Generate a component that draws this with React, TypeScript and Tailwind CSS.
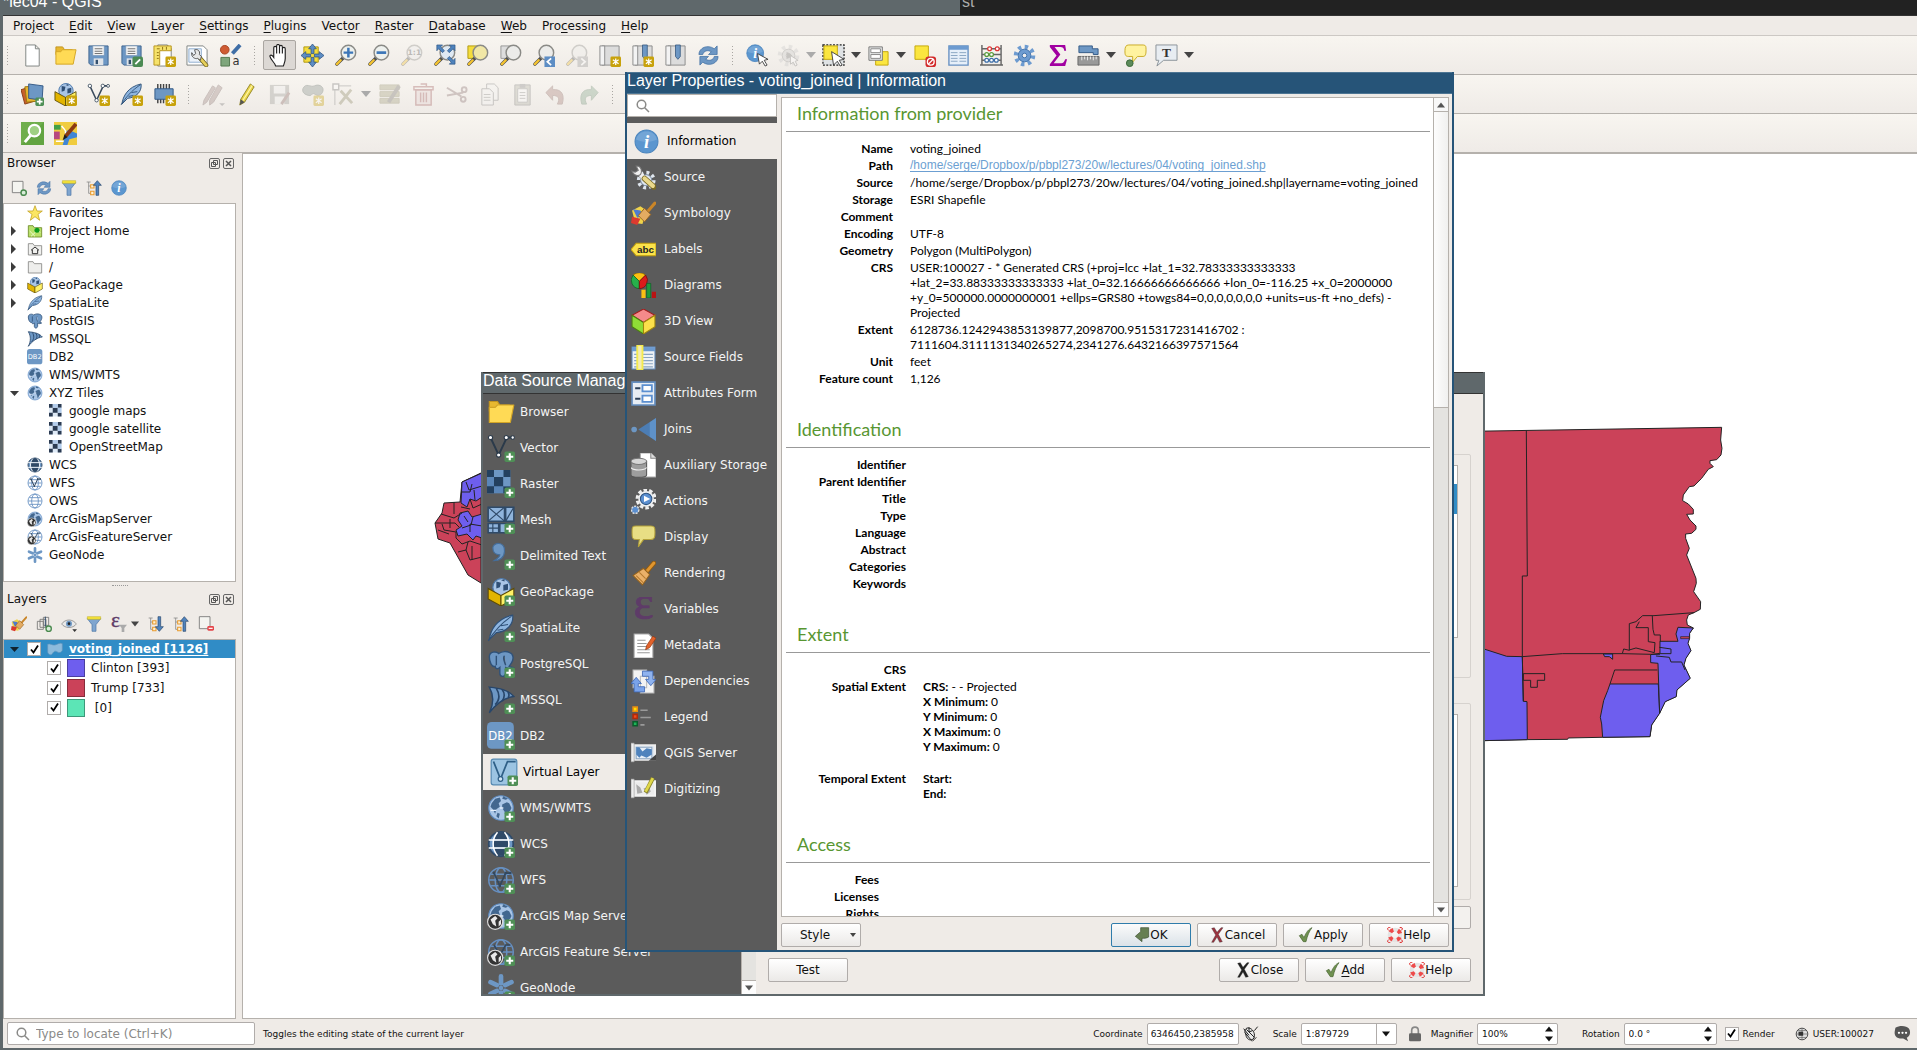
import type { ReactNode } from "react";

const BLUE = "#6d97c4";
const NAVY = "#2f4a68";

const globe = (
  <>
    <circle cx="12" cy="12" r="10.5" fill="#a9c5e6" stroke="#5f8dc2" />
    <path
      d="M4 8l3-4 4-1 1 3-2 2 1 3-3 2-1 4-2-4-2-2zM13 9l4-2 2 1 2 4-2 4-3 4-1-5-2-3zM9 16l2 1-1 4-2-2zM14 2l4 2-2 1-3-1z"
      fill="#42678f"
    />
    <path d="M3 14h5M11 12h3M18 18l2-3" stroke="#e4eefa" strokeWidth="1.2" />
  </>
);

const wireGlobe = (
  <g fill="none" stroke="#6690c2" strokeWidth="1.3">
    <circle cx="12" cy="12" r="10.5" />
    <ellipse cx="12" cy="12" rx="5" ry="10.5" />
    <path d="M2 12h20M3.5 7h17M3.5 17h17" />
  </g>
);

const lens = (glass: string) => (
  <>
    <path d="M10 14l-7 7" stroke="#4f4f4f" strokeWidth="3.6" strokeLinecap="round" />
    <path d="M7 17l-4 4" stroke="#f4c330" strokeWidth="2.4" strokeLinecap="round" />
    <circle cx="15" cy="9" r="7.6" fill={glass} stroke="#8a8a86" strokeWidth="1.5" />
  </>
);

const page = <path d="M5 1h10l4 4v18H5z M15 1v4h4" fill="#fff" stroke="#7f8583" strokeLinejoin="round" />;

const floppy = (
  <>
    <path d="M2 2h20v20H4l-2-2z" fill={BLUE} stroke="#3f648f" />
    <path d="M6 2h12v10H6z" fill="#f3f3f3" stroke="#6c8db2" strokeWidth=".6" />
    <path d="M8 5h8M8 7.5h8M8 10h8" stroke="#777" strokeWidth="1.1" />
    <path d="M7 15h10v7H7z" fill="#dfe3e8" />
    <path d="M9 16.500h2.5v4.5H9z" fill="#34506f" />
  </>
);

const pencil = (
  <>
    <path d="M6 17L16 1l4 3L10 20l-5 3z" fill="#e8d44c" stroke="#8d7f1e" strokeWidth=".9" />
    <path d="M18 2.500L8 18.500" stroke="#fff6a8" strokeWidth="1.2" />
    <path d="M6 17l4 3-5 3z" fill="#555" />
  </>
);

const gear = (fill: string, stroke: string) => (
  <>
    <circle cx="12" cy="12" r="9" fill="none" stroke={fill} strokeWidth="4.5" strokeDasharray="3.5 3.56" />
    <circle cx="12" cy="12" r="6.6" fill={fill} stroke={stroke} strokeWidth="1" />
    <circle cx="12" cy="12" r="2.4" fill="#eee" stroke={stroke} />
  </>
);

const syncArrows = (
  <>
    <path d="M2 11C2 4 11 0 18 5l3-3v9h-9l3-3C11 6 7 7 6 11z" fill={BLUE} stroke="#4472a5" strokeWidth=".8" />
    <path d="M22 13c0 7-9 11-16 6l-3 3v-9h9l-3 3c4 2 8 1 9-3z" fill={BLUE} stroke="#4472a5" strokeWidth=".8" />
  </>
);

const boxGlobe = (
  <>
    <circle cx="12.5" cy="8" r="7.5" fill="#a9c5e6" stroke="#4d79ab" />
    <path d="M8 3l4 1-1 4-3 1zM14 6l4-1v5l-4 1zM12 2l3-1v2z" fill="#2f4f75" />
    <path d="M1 9l11 6v9L1 18z" fill="#e2b400" stroke="#5b4a05" strokeWidth=".9" />
    <path d="M12 15l11-6v9l-11 6z" fill="#fff166" stroke="#5b4a05" strokeWidth=".9" />
  </>
);

const feather = (
  <>
    <path d="M2 22C3 14 8 4 22 1c1 8-5 14-14 15z" fill="#8fb6e0" stroke="#2f5178" strokeWidth="1" />
    <path d="M1 23C6 15 12 8 21 2M9 14l5-1M12 10l6-1" fill="none" stroke="#2f5178" strokeWidth=".9" />
  </>
);

const nodes = (ink: string, dot: string) => (
  <>
    <path d="M3 3l7 15L17 3h5" fill="none" stroke={ink} strokeWidth="1.6" />
    <g fill={dot} stroke={ink} strokeWidth=".9">
      <circle cx="3" cy="3" r="1.8" />
      <circle cx="10" cy="18" r="1.8" />
      <circle cx="16.5" cy="3" r="1.8" />
      <circle cx="22" cy="3" r="1.5" />
    </g>
  </>
);

const elephant = (
  <path
    d="M2 6c0-5 6-5 8-3 3-2 7-2 9-1 4 1 4 6 2 9l-2 3 3 1-3 1-3-1v5c-1 4-5 3-5 0v-5c-2 2-4 1-4-1-3 1-5-4-5-8zM8 5v8M15 5c-2 2 0 5 1 8"
    fill={BLUE}
    stroke="#2f5178"
    strokeWidth="1.2"
  />
);

const sail = (
  <>
    <path d="M2 1c8 1 16 2 21 8-8 1-15 6-21 14 4-8 4-15 0-22z" fill={BLUE} stroke="#28466a" strokeWidth="1.2" />
    <path d="M8 2c3 5 3 10-1 14M13 3c3 4 2 7 0 10M18 5c1 2 1 4 0 5" fill="none" stroke="#28466a" strokeWidth="1.4" />
  </>
);

const db2 = (
  <>
    <rect x="0" y="0" width="23" height="23" rx="4" fill={BLUE} />
    <text x="11.5" y="15" textAnchor="middle" fontSize="10" fill="#fff" fontFamily="DejaVu Sans">
      DB2
    </text>
  </>
);

const checker = (light: string, mid: string, dark: string) => (
  <>
    <path d="M0 0h20v20H0z" fill={mid} />
    <path d="M0 0h6v6H0zM14 0h6v6h-6zM6 6h8v8H6zM0 14h6v6H0zM14 14h6v6h-6z" fill={dark} />
    <path d="M6 0h8v6H6zM14 6h6v8h-6z" fill={light} />
  </>
);

const tree = (
  <>
    <path d="M1 3h6M4 3v17h6M4 9h6" fill="none" stroke="#888" strokeWidth="1.2" />
    <path d="M7 7h5v5H7zM7 17h5v5H7z" fill="#fff3d8" stroke="#e99a2c" strokeWidth="1.6" />
  </>
);

const broom = (
  <>
    <path d="M1 9l8-4 6 4-4 13-7-1z" fill="#f0d34a" />
    <path d="M2 8l7 1 3 5-6 2z" fill="#4d7bd0" />
    <path d="M1 15l8 2-3 6-6-2z" fill="#db3a2f" />
    <path d="M23 2l-7 8" stroke="#c98528" strokeWidth="3" strokeLinecap="round" />
    <path d="M13 7l6 6-6 7-6-6z" fill="#e3ab62" stroke="#93621e" strokeWidth=".9" />
  </>
);

const infoDisc = (
  <>
    <circle cx="12" cy="12" r="11" fill="#5b96cf" stroke="#4a84bd" />
    <path d="M2 10C4 0 20 0 22 10c-6 3-14 3-20 0z" fill="#fff" opacity=".15" />
    <text
      x="12"
      y="18.5"
      textAnchor="middle"
      fontSize="18"
      fontStyle="italic"
      fontWeight="bold"
      fill="#fff"
      fontFamily="Liberation Serif"
    >
      i
    </text>
  </>
);

const folder = (fill: string, stroke: string) => (
  <path d="M2 4h7l2 3h11v14H2z" fill={fill} stroke={stroke} strokeWidth="1.3" strokeLinejoin="round" />
);

const roll = (
  <>
    <path d="M4 2h18v20H4z" fill="#dcdcdc" stroke="#8c8c8c" />
    <path d="M2 2h5v20H2z" fill="#f3f3f3" stroke="#8c8c8c" />
  </>
);

const bookmark = <path d="M12 1h5v12l-2.5 3-2.5-3z" fill={BLUE} stroke="#33557c" strokeWidth=".8" />;

const funnel = (
  <>
    <path d="M2 4h20l-7 9v10h-6V13z" fill="#7fa5cf" stroke="#4a74a5" />
    <path d="M2 1h20v4H2z" fill="#f5e23b" stroke="#b9a91b" strokeWidth=".7" />
  </>
);

const arcBadge = (
  <>
    <circle cx="7" cy="17" r="6.5" fill="#333" stroke="#ddd" />
    <path d="M3 15l4-3 2 2-2 2 1 5-3-2zM10 17l2-2v4l-2 2z" fill="#e9e9e9" />
  </>
);

const check = <path d="M2 13l4-2 3 5C12 8 16 3 21 1c-4 5-7 12-9 21H8z" fill="#6f9150" stroke="#44602e" />;

const buoy = (
  <>
    <circle cx="12" cy="12" r="8" fill="none" stroke="#e4e4e4" strokeWidth="6" />
    <circle
      cx="12"
      cy="12"
      r="8"
      fill="none"
      stroke="#ee4a4a"
      strokeWidth="6"
      strokeDasharray="5.5 7.06"
      strokeDashoffset="-3.5"
    />
    <path
      d="M5 1C1 0 0 2 2 5M19 1c4-1 5 1 3 4M5 23c-4 1-5-1-3-4M19 23c4 1 5-1 3-4"
      fill="none"
      stroke="#d22"
      strokeWidth="1.5"
    />
  </>
);

const cross = (fill: string) => (
  <path d="M4 2l4-1 4 7 6-7h3l-7 10 6 11-4 1-4-8-5 8H4l6-11z" fill={fill} stroke="#222" strokeWidth=".5" />
);

const ICONS: Record<string, ReactNode> = {
  page,
  folder: (
    <>
      <path d="M2 3h7l2 3h8v5H2z" fill="#e8b830" stroke="#c39520" />
      <path d="M2 21V8h5l2-2h14l-3 15z" fill="#ffda55" stroke="#d3a526" strokeLinejoin="round" />
    </>
  ),
  floppy,
  floppyEdit: (
    <>
      {floppy}
      <rect x="13" y="13" width="11" height="11" rx="2" fill="#4b8a53" />
      <path d="M16 21l5-5" stroke="#fff" strokeWidth="2" />
    </>
  ),
  layout: (
    <>
      {page}
      <path d="M1 2h18v5H7v15H1z" fill="#f6e26b" stroke="#b8951c" />
      <path d="M4 5h3M4 9h2M4 12h2M4 15h2M10 3v3M14 3v3" stroke="#8d7113" />
    </>
  ),
  layoutManager: (
    <>
      <path d="M1 2h17l4 4v16H1z" fill="#fff" stroke="#7f8583" />
      <path d="M3 5h13v14H3z" fill="#edf3fa" stroke="#8eaccf" />
      <path d="M14 14l7 8" stroke="#6a5c1c" strokeWidth="4.5" strokeLinecap="round" />
      <path d="M14 14l7 8" stroke="#e6cf5a" strokeWidth="3" strokeLinecap="round" />
      <path d="M6 9c-1 5 4 7 6 6l3 2 1-4-2-2c1-4-2-6-5-5l1 4-2 2z" fill="#e8e8e8" stroke="#555" />
    </>
  ),
  styles: (
    <>
      <circle cx="6" cy="6" r="4.5" fill="#cf5b33" stroke="#a6431f" />
      <path d="M14 10l8-9" stroke="#3f6ea6" strokeWidth="4" />
      <path d="M2 14h9v9H2z" fill="#7fa67c" stroke="#54774f" />
      <text x="14" y="22" fontSize="12" fill="#333" fontFamily="DejaVu Sans">
        a
      </text>
    </>
  ),
  hand: (
    <path
      d="M8 23c-1-4-5-6-6-10 0-2 2-2 4 1V4c0-2 3-2 3 0V2c0-2 3-2 3 0v1c0-2 3-2 3 0v2c0-2 3-2 3 0v10c0 3-1 5-2 8zM9 4v6M12 3v7M15 5v5"
      fill="#fff"
      stroke="#222"
      strokeWidth="1.2"
    />
  ),
  panSelection: (
    <>
      <path d="M3 3h15v16H3z" fill="#f5dd3c" stroke="#b19a13" />
      <path
        d="M12 0l4 5h-2.5v5h-3V5H8zM12 24l4-5h-2.5v-5h-3v5H8zM0 12l5-4v2.5h5v3H5V16zM24 12l-5-4v2.5h-5v3h5V16z"
        fill="#5d8dc4"
        stroke="#2f5582"
        strokeWidth=".8"
      />
    </>
  ),
  zoomIn: (
    <>
      {lens("#eef1ee")}
      <path d="M15 4v10M10 9h10" stroke="#3c76b8" strokeWidth="2.6" />
    </>
  ),
  zoomOut: (
    <>
      {lens("#eef1ee")}
      <path d="M10 9h10" stroke="#3c76b8" strokeWidth="2.8" />
    </>
  ),
  zoomNative: (
    <>
      {lens("#eee")}
      <text x="15" y="12" textAnchor="middle" fontSize="8" fontWeight="bold" fill="#555" fontFamily="DejaVu Sans">
        1:1
      </text>
    </>
  ),
  zoomFull: (
    <>
      {lens("#dfe9f3")}
      <path
        d="M4 1h6L8 3l4 4-2 2-4-4-2 2zM23 1h-6l2 2-4 4 2 2 4-4 2 2zM23 21h-6l2-2-4-4 2-2 4 4 2-2z"
        fill="#4f83bd"
        stroke="#2f5582"
        strokeWidth=".7"
      />
    </>
  ),
  zoomSelection: (
    <>
      <path d="M2 2h11v13H2z" fill="#f5dd3c" stroke="#b19a13" />
      {lens("#f1e7a6")}
    </>
  ),
  zoomLayer: (
    <>
      <path d="M2 2h11v13H2z" fill="#ddd" stroke="#999" />
      {lens("#ececea")}
    </>
  ),
  zoomLast: (
    <>
      {lens("#ececea")}
      <rect x="13" y="13" width="11" height="11" fill="#5d8dc4" />
      <path d="M20 15l-4 3.5 4 3.5" fill="none" stroke="#fff" strokeWidth="1.8" />
    </>
  ),
  zoomNext: (
    <>
      {lens("#ececea")}
      <rect x="13" y="13" width="11" height="11" fill="#999" />
      <path d="M17 15l4 3.5-4 3.5" fill="none" stroke="#fff" strokeWidth="1.8" />
    </>
  ),
  roll,
  bookmarkNew: (
    <>
      {roll}
      {bookmark}
    </>
  ),
  sync: syncArrows,
  identify: (
    <>
      <g transform="scale(.8)">{infoDisc}</g>
      <path d="M12 10l11 6-4 1 3 5-2 1-3-5-3 3z" fill="#fff" stroke="#333" strokeWidth=".9" />
    </>
  ),
  action: (
    <>
      {gear("#c9c9c9", "#8d8d8d")}
      <path d="M10 8l6 4-6 4z" fill="#777" />
      <path d="M14 12l8 5-3 1 2 4-2 1-2-4-3 2z" fill="#fff" stroke="#777" />
    </>
  ),
  select: (
    <>
      <path d="M1 1h22v21H1z" fill="#dfe2e4" stroke="#222" strokeWidth="1.3" strokeDasharray="2 1.5" />
      <path d="M2 2h14v14H2z" fill="#fbe63f" stroke="#c4a80b" />
      <path d="M10 8l13 8-5 1 3 5-2 1-3-5-4 4z" fill="#fff" stroke="#333" strokeWidth=".9" />
    </>
  ),
  selectForm: (
    <>
      <path d="M9 8h13v14H9z" fill="#fbe63f" stroke="#c4a80b" />
      <path d="M2 3h14v14H2z" fill="#e8eaea" stroke="#777" />
      <path d="M4 5h10v4H4zM4 11h10v4H4z" fill="#fff" stroke="#888" />
    </>
  ),
  deselect: (
    <>
      <path d="M1 2h14v14H1z" fill="#fbe63f" stroke="#c4a80b" />
      <rect x="12" y="13" width="11" height="11" rx="3" fill="#d22b2b" />
      <circle cx="17.5" cy="18.5" r="3.5" fill="none" stroke="#fff" strokeWidth="1.4" />
      <path d="M15 21l5-5" stroke="#fff" strokeWidth="1.4" />
    </>
  ),
  table: (
    <>
      <path d="M2 2h20v20H2z" fill="#e6eff9" stroke="#6690c2" strokeWidth="1.4" />
      <path d="M2 2h20v4H2z" fill="#6d9bd0" />
      <path d="M4 9h7M4 12h7M4 15h7M4 18h7M13 9h7M13 12h7M13 15h7M13 18h7" stroke="#8aa5c2" />
    </>
  ),
  abacus: (
    <>
      <path d="M2 1v21M22 1v21M2 5h20M2 11h20M2 17h20M0 22h24" stroke="#666" strokeWidth="1.5" fill="none" />
      <g strokeWidth="1.3" fill="#fff">
        <g stroke="#d33">
          <circle cx="10" cy="5" r="2" />
          <circle cx="18" cy="5" r="2" />
        </g>
        <g stroke="#5a9b3e">
          <circle cx="7" cy="11" r="2" />
          <circle cx="12" cy="11" r="2" />
        </g>
        <g stroke="#3e6fa9">
          <circle cx="7" cy="17" r="2" />
          <circle cx="12" cy="17" r="2" />
          <circle cx="17" cy="17" r="2" />
        </g>
      </g>
    </>
  ),
  gear: gear("#6d9bd0", "#3f72ac"),
  sigma: <path d="M4 1h16l1 6h-2c0-3-2-4-4-4H9l6 8-7 9h8c2 0 3-1 4-4h2l-2 7H4v-2l7-9-7-9z" fill="#a100a1" />,
  measure: (
    <>
      <path d="M2 2h14v3h6v6h-5V9H2z" fill={BLUE} stroke="#345a87" />
      <path d="M1 13h22v9H1z" fill="#999" stroke="#666" />
      <path d="M5 13v4M8 13v3M11 13v4M14 13v3M17 13v4M20 13v3" stroke="#eee" />
    </>
  ),
  tip: (
    <>
      <path d="M5 1h15c3 0 3 2 3 5s0 7-3 7h-6l-5 6v-6H5c-4 0-4-2-4-6s1-6 4-6z" fill="#fff3a0" stroke="#c9ab28" />
      <circle cx="6" cy="20" r="3.5" fill="#5c8a5a" stroke="#3c6a3a" />
    </>
  ),
  textAnnotation: (
    <>
      <path d="M1 1h22v16H9l-7 6 2-6H1z" fill="#e8edf2" stroke="#8a9299" />
      <text x="12" y="14" textAnchor="middle" fontSize="14" fontWeight="bold" fill="#333" fontFamily="Liberation Serif">
        T
      </text>
    </>
  ),
  sourceManager: (
    <>
      <path d="M0 7l10-3 4 15-10 3z" fill="#c8602a" stroke="#8a3f16" />
      <path d="M4 4l11-1 2 16-11 1z" fill="#e7b52e" stroke="#9c7510" />
      <path d="M8 1l15 2-1 15-14-2z" fill={BLUE} stroke="#345a87" />
    </>
  ),
  boxGlobe,
  nodes: nodes("#394a5c", "#fff"),
  nodesLight: nodes("#2b3a4a", "#fff"),
  feather,
  chip: (
    <>
      <path d="M5 1v6M8 1v6M11 1v6M14 1v6M17 1v6M5 16v5M8 16v5M11 16v5" stroke="#444" strokeWidth="1.5" />
      <path d="M2 6h19v11H2z" fill={BLUE} stroke="#345a87" />
    </>
  ),
  pencils: (
    <>
      <path d="M2 18L11 3l3 2L5 20l-4 3zM8 18l9-16 4 3-9 15-4 3z" fill="#9c8480" stroke="#7d6a67" />
      <path d="M18 21h6l-3 3z" fill="#777" />
    </>
  ),
  pencil,
  saveEdits: (
    <>
      <path d="M2 2h20v20H2z" fill="#9a9a96" />
      <path d="M6 3h12v8H6zM7 14h10v8H7z" fill="#eee" />
      <path d="M14 22l8-12" stroke="#8b6a66" strokeWidth="3" />
    </>
  ),
  polygonEdit: <path d="M2 6c3-7 8-1 12-3s9 0 9 4-4 8-8 5-3 2-7 1-7-3-6-7z" fill="#87918c" stroke="#5f6a64" />,
  vertexTool: (
    <>
      <path d="M3 23V6l3-3h14" fill="none" stroke="#777" />
      <path d="M1 1h6v6H1z" fill="#fff" stroke="#777" strokeWidth="1.5" />
      <path d="M8 22L20 7M9 8l12 13" stroke="#8e8a68" strokeWidth="3" />
    </>
  ),
  modifyAttributes: (
    <>
      <path d="M1 2h20v5H1zM1 9h20v5H1zM1 16h20v5H1z" fill="#a5a17e" stroke="#8f8b6a" />
      <path d="M10 20L21 3" stroke="#77736c" strokeWidth="4" />
    </>
  ),
  trash: (
    <>
      <path d="M4 7h16v16H4z" fill="#e5d2d2" stroke="#a05c5c" strokeWidth="1.5" />
      <path d="M2 4h20v3H2zM9 1h6v3M9 10v10M12 10v10M15 10v10" fill="none" stroke="#a05c5c" strokeWidth="1.5" />
    </>
  ),
  cut: (
    <g fill="none" stroke="#8b7373" strokeWidth="2">
      <path d="M2 5l15 9M2 13l17-3" />
      <circle cx="20" cy="7" r="2.5" />
      <circle cx="19" cy="17" r="2.5" />
    </g>
  ),
  copy: (
    <>
      <path d="M9 1h8l4 4v13H9z" fill="#f5f5f5" stroke="#777" />
      <path d="M4 6h8l4 4v13H4z" fill="#f5f5f5" stroke="#777" />
      <path d="M6 12h7M6 15h7M6 18h7" stroke="#888" />
    </>
  ),
  paste: (
    <>
      <path d="M4 2h16v21H4z" fill="#b5b5a8" stroke="#777" />
      <path d="M7 6h10v14H7z" fill="#fff" stroke="#888" />
      <path d="M9 1h6v4H9z" fill="#888" />
      <path d="M9 10h6M9 13h6M9 16h6" stroke="#888" />
    </>
  ),
  undo: <path d="M9 3v4c9-1 13 5 10 15h-5c3-6 1-9-5-9v5L2 10z" fill="#a87f78" stroke="#8a6a64" />,
  redo: <path d="M15 3v4C6 6 2 12 5 22h5c-3-6-1-9 5-9v5l7-8z" fill="#84a58a" stroke="#6d8a72" />,
  osmSearch: (
    <>
      <path d="M0 0h24v24H0z" fill="#6fae4c" />
      <path d="M0 24L24 0v24z" fill="#559a35" opacity=".5" />
      <circle cx="14" cy="9" r="6" fill="#9fd083" stroke="#fff" strokeWidth="2.2" />
      <path d="M10 14l-6 7" stroke="#fff" strokeWidth="3" />
    </>
  ),
  openLayers: (
    <>
      <path d="M0 0h24v24H0z" fill="#f0cc3f" />
      <path d="M0 3h7v5H0z" fill="#43a047" />
      <path d="M0 10h6v8H0z" fill="#b8487f" />
      <path d="M9 24c3-8 0-12 6-16l9 4v4l-8 2-2 6z" fill="#3f86d6" />
      <path d="M8 4c2 4 5 3 4 8M2 20h8" stroke="#fff" strokeWidth="1.5" fill="none" />
      <path d="M23 2L12 15" stroke="#8a3a12" strokeWidth="4" />
      <path d="M11 13l3 3-5 3z" fill="#1c1c1c" />
    </>
  ),
  addLayer: (
    <>
      <path d="M2 2h16v17H2z" fill="#f4f4f0" stroke="#777" strokeWidth="1.3" />
      <circle cx="19" cy="19" r="4" fill="#d9ecd9" stroke="#4a8a4f" strokeWidth="2.2" />
    </>
  ),
  removeLayer: (
    <>
      <path d="M2 1h16v18H2z" fill="#f4f4f0" stroke="#777" strokeWidth="1.3" />
      <rect x="14" y="15" width="10" height="7" rx="2" fill="#e4454a" />
      <path d="M16 18.500h6" stroke="#fff" strokeWidth="1.8" />
    </>
  ),
  funnel,
  collapse: (
    <>
      {tree}
      <path d="M17 1l6 7h-4v15h-4V8h-4z" fill="#4f83bd" stroke="#28466a" />
    </>
  ),
  expand: (
    <>
      {tree}
      <path d="M17 23l6-7h-4V1h-4v15h-4z" fill="#4f83bd" stroke="#28466a" />
    </>
  ),
  info: infoDisc,
  star: <path d="M12 1l3 8h8l-6.500 5L19 23l-7-5.500L5 23l2.500-9L1 9h8z" fill="#fbe663" stroke="#b8950f" />,
  projectHome: (
    <>
      {folder("#b9e069", "#6f8d2a")}
      <path d="M4 12l8 8M6 20L18 9M12 8l8 6" stroke="#e9f8c8" strokeWidth="1.5" />
      <circle cx="15" cy="11" r="3.8" fill="#0b9a1c" />
    </>
  ),
  home: (
    <>
      {folder("#f0f0ee", "#8a8a88")}
      <path d="M6 14l6-5 6 5M8 13v6h8v-6" fill="none" stroke="#333" strokeWidth="1.5" />
    </>
  ),
  plainFolder: folder("#eeeeec", "#8a8a88"),
  elephant,
  sail,
  db2,
  globe,
  checkerSmall: checker("#b4cdec", "#dfeaf6", "#2b3b52"),
  checker: checker("#6d97c4", "#5a86b8", "#23405f"),
  wcs: (
    <>
      <circle cx="12" cy="12" r="10.5" fill={BLUE} stroke={NAVY} strokeWidth="1.5" />
      <path d="M8 2h8l2 6H6zM6 16h12l-2 6H8z" fill={NAVY} />
      <path d="M6 9h12v6H6z" fill={NAVY} />
      <path
        d="M1.500 8.500h21M1.500 15.500h21M9 2c-5 6-5 14 0 20M15 2c5 6 5 14 0 20"
        fill="none"
        stroke="#fff"
        strokeWidth="1.3"
      />
    </>
  ),
  wfs: (
    <>
      {wireGlobe}
      <path d="M6 6l5 11 5-11h4" fill="none" stroke="#33485f" strokeWidth="1.5" />
      <path d="M5 5h2v2H5zM10 16h2v2h-2zM15 5h2v2h-2zM19 5h2v2h-2z" fill="#33485f" />
    </>
  ),
  ows: wireGlobe,
  arcMap: (
    <>
      {globe}
      {arcBadge}
    </>
  ),
  arcFeature: (
    <>
      {wireGlobe}
      <path d="M6 6l5 9 5-9h4" fill="none" stroke="#33485f" strokeWidth="1.4" />
      {arcBadge}
    </>
  ),
  geonode: (
    <>
      <path
        d="M12 2v6M12 16v6M3 7l5.500 2.500M15.500 14.500L21 17M21 7l-5.500 2.500M8.500 14.500L3 17"
        stroke={BLUE}
        strokeWidth="4"
        strokeLinecap="round"
      />
      <circle cx="12" cy="12" r="2" fill={BLUE} />
    </>
  ),
  eye: (
    <>
      <path d="M1 12C6 4 18 4 23 12 18 19 6 19 1 12z" fill="#e8e8e8" stroke="#777" />
      <circle cx="12" cy="11.5" r="4.5" fill={BLUE} />
      <circle cx="12" cy="11.5" r="2" fill="#222" />
      <path d="M17 20h7l-3.500 4z" fill="#333" />
    </>
  ),
  groupAdd: (
    <>
      <path d="M2 8h9v12H2zM6 5h9v12H6zM11 2h8v12h-8z" fill="none" stroke="#777" strokeWidth="1.3" />
      <path d="M14 1v15" stroke="#34506f" strokeWidth="1.5" />
      <circle cx="19" cy="19" r="4" fill="#d9ecd9" stroke="#4a8a4f" strokeWidth="2" />
    </>
  ),
  epsilonFilter: (
    <>
      <text x="0" y="16" fontSize="32" fill="#5e3b68" stroke="#5e3b68" strokeWidth=".6" fontFamily="Liberation Serif">
        ε
      </text>
      <path d="M12 13h12l-4 5v6h-4v-6z" fill="#aaa" />
    </>
  ),
  broom,
  polygonLayer: (
    <path d="M1 5c4-2 7 2 11 1s7-4 11-2v10c-2 4-5 4-8 2s-5 0-7 3-6 2-7-2z" fill="#8dbbdc" stroke="#5f93bb" />
  ),
  mesh: (
    <>
      <path
        d="M1 1h14v12H1zM16 1h7v12h-7zM1 15h9v8H1zM11 15h12v8H11z"
        fill="#8fb4dc"
        stroke={NAVY}
        strokeWidth="1.3"
      />
      <path d="M1 1l14 12M15 1L1 13M23 1l-7 12M1 19h9M5 15v8" stroke={NAVY} strokeWidth="1" />
    </>
  ),
  comma: <path d="M5 5c0-5 11-6 10 3 0 5-4 8-9 8 3-2 5-3 5-5-4 0-6-2-6-6z" fill={BLUE} stroke="#456d99" />,
  virtual: (
    <>
      <rect x="1" y="1" width="22" height="22" rx="2" fill="#9cc4e2" stroke="#5489b2" />
      <path d="M3 3l6 15L15 3h7" fill="none" stroke="#2f5f86" strokeWidth="1.5" />
      <circle cx="9" cy="18" r="2" fill="#cfe4f3" stroke="#2f5f86" />
    </>
  ),
  wrench: (
    <>
      <g transform="translate(5 5) scale(.8)">{gear("#dfe6ee", "#7d93ad")}</g>
      <path d="M8 8l11 11" stroke="#efefef" strokeWidth="4.5" />
      <path d="M1 6c3 6 9 5 9 0 0-3-2-5-5-5l2 4-3 2z" fill="#f0f0f0" stroke="#777" />
      <path d="M13 13l9 8" stroke="#7a6a24" strokeWidth="5.5" strokeLinecap="round" />
      <path d="M13 13l8 7" stroke="#ead98b" strokeWidth="4" strokeLinecap="round" />
    </>
  ),
  labels: (
    <>
      <path d="M0 12l5-6h19v12H5z" fill="#fbe24a" stroke="#c4a00d" />
      <text x="14" y="15" textAnchor="middle" fontSize="9.5" fontWeight="bold" fill="#222" fontFamily="Liberation Sans">
        abc
      </text>
    </>
  ),
  diagrams: (
    <>
      <path d="M8 8L2 2a9 9 0 0112 0z" fill="#fbc012" stroke="#7a5c00" strokeWidth=".7" />
      <path d="M8 8L2 2a8 8 0 006 13z" fill="#27b04b" stroke="#0f5c23" strokeWidth=".7" />
      <path d="M8 8l6-6a8 8 0 01-6 13z" fill="#dc1b1b" stroke="#6e0b0b" strokeWidth=".7" />
      <path d="M10 16h4v8h-4z" fill="#fbc012" />
      <path d="M15 10h4v14h-4z" fill="#1f9a3d" stroke="#0f5c23" strokeWidth=".6" />
      <path d="M20 18h4v6h-4z" fill="#b81414" />
    </>
  ),
  cube: (
    <>
      <path d="M12 0l11 6-11 7L1 6z" fill="#f58a8a" stroke="#a11d1d" />
      <path d="M1 6l11 7v11L1 17z" fill="#8fdc36" stroke="#4c7d10" />
      <path d="M23 6l-11 7v11l11-7z" fill="#fbe04b" stroke="#a0860c" />
    </>
  ),
  fields: (
    <>
      <path d="M1 2h22v21H1z" fill="#eef2f6" stroke="#6690c2" />
      <path d="M1 2h22v4H1z" fill="#6d9bd0" />
      <path d="M3 9h18M3 12h18M3 15h18M3 18h18M3 21h18" stroke="#8aa5c2" />
      <path d="M6 0h5v24H6z" fill="#f3ecb4" stroke="#f4ea4e" strokeWidth="1.8" />
    </>
  ),
  form: (
    <>
      <path d="M1 1h22v22H1z" fill="#e7edf4" stroke="#6690c2" strokeWidth="1.6" />
      <path d="M4 7h5M4 17h5" stroke="#2b3f58" strokeWidth="2" />
      <path d="M11 4h9v6h-9zM11 14h9v6h-9z" fill="#fff" stroke="#5b8fd0" strokeWidth="1.8" />
    </>
  ),
  joins: (
    <>
      <circle cx="3" cy="12" r="2.7" fill={BLUE} />
      <path d="M24 1v22L7 12z" fill="#4c7db4" />
      <path d="M24 1v22l-6-4V5z" fill="#6a9fd6" opacity=".6" />
    </>
  ),
  storage: (
    <>
      <path d="M9 0h10l5 5v18H9z" fill="#fff" stroke="#aaa" />
      <path d="M19 0v5h5" fill="#ddd" stroke="#888" />
      <path d="M0 8v13c0 3 15 3 15 0V8z" fill="#9d9d9d" stroke="#555" />
      <path d="M0 14c2 3 13 3 15 0" fill="none" stroke="#eee" />
      <ellipse cx="7.5" cy="8" rx="7.5" ry="3" fill="#d6d6d6" stroke="#777" />
    </>
  ),
  actions: (
    <>
      <circle cx="14.5" cy="9.5" r="8.600" fill="none" stroke="#eee" strokeWidth="3" strokeDasharray="3.400 2" />
      <circle cx="14.5" cy="9.5" r="7.500" fill="#f2f2f2" />
      <circle cx="14.5" cy="9.5" r="5.500" fill="#5b8fd0" stroke="#2f5582" />
      <path d="M12.500 6.500l6 3-6 3z" fill="#fff" />
      <circle cx="4" cy="20" r="3.500" fill="#5b8fd0" stroke="#ddd" strokeWidth="1.4" strokeDasharray="2 1" />
    </>
  ),
  display: (
    <path d="M5 1h14c4 0 4 2 4 6s0 7-4 7h-7l-5 7 1-7H5c-4 0-4-2-4-7s0-6 4-6z" fill="#e8de84" stroke="#b3a13a" />
  ),
  brush: (
    <>
      <path d="M22 2l-7 8" stroke="#8f5a12" strokeWidth="4.5" strokeLinecap="round" />
      <path d="M22 2l-7 8" stroke="#e0962f" strokeWidth="2.8" strokeLinecap="round" />
      <path d="M12 7l6 6-7 10-9-9z" fill="#eab169" stroke="#93621e" />
      <path d="M5 14l7 7M8 11l6 6" stroke="#b67c30" />
    </>
  ),
  epsilon: (
    <text
      x="12"
      y="21"
      textAnchor="middle"
      fontSize="46"
      fill="#5e3b68"
      stroke="#5e3b68"
      strokeWidth=".7"
      fontFamily="Liberation Serif"
    >
      ε
    </text>
  ),
  metadata: (
    <>
      <path d="M3 1h14l4 4v19H3z" fill="#fff" stroke="#aaa" />
      <path d="M6 7h8M6 10h9M6 13h12M6 16h12M6 19h12" stroke="#999" />
      <path d="M14 16l1-4 6-9 3 2-6 9z" fill="#e2622b" stroke="#99390f" strokeWidth=".7" />
    </>
  ),
  dependencies: (
    <>
      <path d="M2 1h13v17H2zM9 7h13v16H9z" fill="#f3f3f3" stroke="#bbb" />
      <path d="M11 2h10v8h3l-5 6-5-6h3V7h-6z" fill="#8fb3ef" stroke="#3f68b5" strokeWidth=".8" />
      <path d="M13 22H3v-8H0l5-6 5 6H7v3h6z" fill="#7aa3ea" stroke="#3f68b5" strokeWidth=".8" />
    </>
  ),
  legend: (
    <>
      <path d="M2 2h4v4H2z" fill="#ffe100" stroke="#e98f12" strokeWidth="1.5" />
      <path d="M2 9h4v4H2z" fill="#f34a1a" stroke="#b12a0a" strokeWidth="1.5" />
      <path d="M2 16h4v4H2z" fill="#1eb458" stroke="#0a5c2a" strokeWidth="1.5" />
      <path d="M9 5h7M9 12h10M9 19h4" stroke="#9a9a9a" strokeWidth="1.6" />
    </>
  ),
  server: (
    <>
      <path d="M2 4h21v14H2z" fill="#dde7f1" stroke="#eee" strokeWidth="2" />
      <path d="M5 6h15v11H5z" fill="#e8f0f8" stroke="#8da5bf" />
      <path d="M5 6h3l3 4 4-3 5 1v5l-5 3-5-2-2 2-3-3z" fill="#4f83bd" />
      <path d="M0 2h3v18H0z" fill="#eee" stroke="#999" strokeWidth=".6" />
      <path d="M24 13l-7 6h7z" fill="#444" />
    </>
  ),
  digitizing: (
    <>
      <path d="M2 4h21v14H2z" fill="#ececec" stroke="#f3f3f3" strokeWidth="2" />
      <path d="M5 7l4 3 2 5-5 1zM12 11l5-2 2 5-4 3z" fill="#aaa" />
      <path d="M0 2h3v18H0z" fill="#eee" stroke="#999" strokeWidth=".6" />
      <path d="M14 15L21 1" stroke="#8a842a" strokeWidth="4" />
      <path d="M14 14L21 1" stroke="#e0d84a" strokeWidth="2.6" />
    </>
  ),
  ok: <path d="M10 1h12v14c-3 2-7 2-10 2v5L2 14l8-7z" fill="#667f52" stroke="#3d4f30" />,
  cancel: cross("#9c3340"),
  close: cross("#222"),
  apply: check,
  help: buoy,
  toggleExtents: (
    <>
      <path d="M4 12c-3-5 0-10 5-9s9 7 8 13-9 7-12 0z" fill="#e9e9e9" stroke="#222" strokeWidth="1.5" />
      <path d="M5 5l12 12M3 10l10 12M9 2v7l5-2M22 1l-5 6M1 4l8 10M14 23l6-6" stroke="#222" strokeWidth="1.5" fill="none" />
    </>
  ),
  lock: (
    <>
      <path d="M7 12V7c0-7 10-7 10 0v5" fill="none" stroke="#888" strokeWidth="2.5" />
      <rect x="3" y="11" width="18" height="12" rx="2" fill="#666" />
    </>
  ),
  crs: (
    <>
      <circle cx="12" cy="12" r="10" fill="#ddd" stroke="#444" strokeWidth="1.6" />
      <path d="M2 12h20M12 2v20M5 6h14M5 18h14" stroke="#555" fill="none" />
      <path d="M6 8h8v7H6z" fill="#333" />
    </>
  ),
  messages: (
    <>
      <path d="M2 4c6-4 16-3 19 1s2 11-3 13l2 5-7-4C4 20 0 15 1 9z" fill="#555" />
      <circle cx="7" cy="11" r="1.6" fill="#fff" />
      <circle cx="12" cy="11" r="1.6" fill="#fff" />
      <circle cx="17" cy="11" r="1.6" fill="#fff" />
    </>
  ),
};

type IconProps = {
  name: string;
  size?: number;
  badge?: "plus" | "new";
  className?: string;
};

function Icon({ name, size = 24, badge, className = "" }: IconProps) {
  return (
    <svg width={size} height={size} viewBox="0 0 24 24" className={`shrink-0 ${className}`} aria-hidden="true">
      {ICONS[name]}
      {badge === "plus" && (
        <>
          <rect x="15" y="15" width="9" height="9" rx="1.5" fill="#4f8f56" />
          <path d="M19.500 16.500v6M16.500 19.500h6" stroke="#fff" strokeWidth="1.8" />
        </>
      )}
      {badge === "new" && (
        <>
          <rect x="13" y="13" width="11" height="11" rx="1.5" fill="#c8a20c" />
          <path d="M18.500 15v7M15.500 16.500l6 4M21.500 16.500l-6 4" stroke="#fff" strokeWidth="1.3" />
        </>
      )}
    </svg>
  );
}

function Caret({ className = "text-[#444]" }: { className?: string }) {
  return (
    <svg width="10" height="6" viewBox="0 0 10 6" className={`shrink-0 ${className}`} aria-hidden="true">
      <path d="M0 0h10L5 6z" fill="currentColor" />
    </svg>
  );
}

function Search() {
  return (
    <svg width="14" height="14" viewBox="0 0 14 14" className="shrink-0" fill="none" stroke="#8a8a88" strokeWidth="1.5">
      <circle cx="5.5" cy="5.5" r="4.3" />
      <path d="M8.500 8.500L13 13" />
    </svg>
  );
}

type Tool = {
  name: string;
  label: string;
  badge?: "plus" | "new";
  menu?: boolean;
  off?: boolean;
  active?: boolean;
};

const mainTools: Tool[][] = [
  [
    { name: "page", label: "New project" },
    { name: "folder", label: "Open project" },
    { name: "floppy", label: "Save project" },
    { name: "floppyEdit", label: "Save project as" },
    { name: "layout", label: "New print layout", badge: "new" },
    { name: "layoutManager", label: "Layout manager" },
    { name: "styles", label: "Style manager" },
  ],
  [
    { name: "hand", label: "Pan map", active: true },
    { name: "panSelection", label: "Pan to selection" },
    { name: "zoomIn", label: "Zoom in" },
    { name: "zoomOut", label: "Zoom out" },
    { name: "zoomNative", label: "Zoom to native resolution", off: true },
    { name: "zoomFull", label: "Zoom full" },
    { name: "zoomSelection", label: "Zoom to selection" },
    { name: "zoomLayer", label: "Zoom to layer" },
    { name: "zoomLast", label: "Zoom last" },
    { name: "zoomNext", label: "Zoom next", off: true },
    { name: "roll", label: "New map view", badge: "new" },
    { name: "bookmarkNew", label: "New bookmark", badge: "new" },
    { name: "bookmarkNew", label: "Show bookmarks" },
    { name: "sync", label: "Refresh" },
  ],
  [
    { name: "identify", label: "Identify features" },
    { name: "action", label: "Run feature action", menu: true, off: true },
    { name: "select", label: "Select features", menu: true },
    { name: "selectForm", label: "Select by value", menu: true },
    { name: "deselect", label: "Deselect features" },
    { name: "table", label: "Open attribute table" },
    { name: "abacus", label: "Field calculator" },
    { name: "gear", label: "Toolbox" },
    { name: "sigma", label: "Statistics" },
    { name: "measure", label: "Measure line", menu: true },
    { name: "tip", label: "Map tips" },
    { name: "textAnnotation", label: "Text annotation", menu: true },
  ],
];

const editTools: Tool[][] = [
  [
    { name: "sourceManager", label: "Data source manager", badge: "plus" },
    { name: "boxGlobe", label: "New GeoPackage layer", badge: "new" },
    { name: "nodes", label: "New shapefile layer", badge: "new" },
    { name: "feather", label: "New SpatiaLite layer", badge: "new" },
    { name: "chip", label: "New scratch layer", badge: "new" },
  ],
  [
    { name: "pencils", label: "Current edits", off: true },
    { name: "pencil", label: "Toggle editing" },
    { name: "saveEdits", label: "Save layer edits", off: true },
    { name: "polygonEdit", label: "Add polygon feature", badge: "new", off: true },
    { name: "vertexTool", label: "Vertex tool", menu: true, off: true },
    { name: "modifyAttributes", label: "Modify attributes", off: true },
    { name: "trash", label: "Delete selected", off: true },
    { name: "cut", label: "Cut features", off: true },
    { name: "copy", label: "Copy features", off: true },
    { name: "paste", label: "Paste features", off: true },
    { name: "undo", label: "Undo", off: true },
    { name: "redo", label: "Redo", off: true },
  ],
  [],
];

const webTools: Tool[][] = [
  [
    { name: "osmSearch", label: "Search" },
    { name: "openLayers", label: "OpenLayers" },
  ],
];

function Handle() {
  return (
    <span className="flex w-4 shrink-0 justify-center">
      <span className="h-5 w-1 bg-[radial-gradient(#a9a6a2_1px,transparent_1px)] bg-[length:3px_3px]" />
    </span>
  );
}

function Toolbar({ groups }: { groups: Tool[][] }) {
  return (
    <div className="flex h-[39px] items-center overflow-hidden border-b border-[#b5b1ac] bg-linear-to-b from-[#f8f5f0] to-[#efebe7]">
      {groups.map((group, i) => (
        <div key={i} className={i === 0 ? "-ml-[3px] flex items-center" : "flex items-center"}>
          <Handle />
          {group.map((tool) => (
            <button
              key={tool.label}
              title={tool.label}
              className={`flex h-[30px] items-center justify-center gap-1.5 rounded-xs ${tool.menu ? "w-[45px] pr-px" : "w-[33px]"} ${
                tool.active ? "border border-[#aaa6a1] bg-[#dcd8d4]" : ""
              }`}
            >
              <Icon name={tool.name} size={23} badge={tool.badge} className={tool.off ? "opacity-35" : ""} />
              {tool.menu && <Caret className={tool.off ? "text-[#aaa]" : "text-[#444]"} />}
            </button>
          ))}
        </div>
      ))}
    </div>
  );
}

const menus = [
  ["Pro", "j", "ect"],
  ["", "E", "dit"],
  ["", "V", "iew"],
  ["", "L", "ayer"],
  ["", "S", "ettings"],
  ["", "P", "lugins"],
  ["Vect", "o", "r"],
  ["", "R", "aster"],
  ["", "D", "atabase"],
  ["", "W", "eb"],
  ["Pro", "c", "essing"],
  ["", "H", "elp"],
];

function PanelTitle({ title }: { title: string }) {
  return (
    <div className="flex h-5 items-center justify-between pr-0.5 pl-1">
      <h2>{title}</h2>
      <div className="flex gap-[3px]">
        <button
          aria-label={`Float ${title}`}
          className="flex size-[11px] items-center justify-center rounded-xs border border-[#666]"
        >
          <svg width="7" height="7" viewBox="0 0 7 7" fill="none" stroke="#555">
            <path d="M2.500.5h4v4h-4zM.5 2.500h4v4h-4z" />
          </svg>
        </button>
        <button
          aria-label={`Close ${title}`}
          className="flex size-[11px] items-center justify-center rounded-xs border border-[#666]"
        >
          <svg width="7" height="7" viewBox="0 0 7 7" stroke="#555" strokeWidth="1.5">
            <path d="M1 1l5 5M6 1L1 6" />
          </svg>
        </button>
      </div>
    </div>
  );
}

type Node = { icon: string; text: string; state?: "open" | "closed"; child?: boolean };

const browserTree: Node[] = [
  { icon: "star", text: "Favorites" },
  { icon: "projectHome", text: "Project Home", state: "closed" },
  { icon: "home", text: "Home", state: "closed" },
  { icon: "plainFolder", text: "/", state: "closed" },
  { icon: "boxGlobe", text: "GeoPackage", state: "closed" },
  { icon: "feather", text: "SpatiaLite", state: "closed" },
  { icon: "elephant", text: "PostGIS" },
  { icon: "sail", text: "MSSQL" },
  { icon: "db2", text: "DB2" },
  { icon: "globe", text: "WMS/WMTS" },
  { icon: "globe", text: "XYZ Tiles", state: "open" },
  { icon: "checkerSmall", text: "google maps", child: true },
  { icon: "checkerSmall", text: "google satellite", child: true },
  { icon: "checkerSmall", text: "OpenStreetMap", child: true },
  { icon: "wcs", text: "WCS" },
  { icon: "wfs", text: "WFS" },
  { icon: "ows", text: "OWS" },
  { icon: "arcMap", text: "ArcGisMapServer" },
  { icon: "arcFeature", text: "ArcGisFeatureServer" },
  { icon: "geonode", text: "GeoNode" },
];

function Twisty({ state, className = "text-[#3c3c3c]" }: { state?: "open" | "closed"; className?: string }) {
  return (
    <span className={`flex w-[23px] shrink-0 pl-1.5 ${className}`}>
      {state && (
        <svg width="10" height="10" viewBox="0 0 10 10">
          <path d={state === "open" ? "M0 3h9L4.500 8z" : "M1 0l5 5-5 5z"} fill="currentColor" />
        </svg>
      )}
    </span>
  );
}

function BrowserPanel() {
  return (
    <section>
      <PanelTitle title="Browser" />
      <div className="flex h-[30px] items-center gap-[9px] px-2">
        {["addLayer", "sync", "funnel", "collapse", "info"].map((name) => (
          <button key={name} aria-label={name}>
            <Icon name={name} size={16} />
          </button>
        ))}
      </div>
      <ul className="h-[379px] border border-[#b5b1ac] bg-white">
        {browserTree.map((node) => (
          <li key={node.text} className="flex h-[18px] items-center">
            <Twisty state={node.state} />
            {node.child && <span className="w-[22px]" />}
            <Icon name={node.icon} size={node.child ? 15 : 16} />
            <span className={node.child ? "pl-[5px]" : "pl-1.5"}>{node.text}</span>
          </li>
        ))}
      </ul>
    </section>
  );
}

function Tick({ id, label }: { id: string; label?: string }) {
  return (
    <span className="grid size-3.5 shrink-0 place-items-center">
      <input
        id={id}
        type="checkbox"
        defaultChecked
        aria-label={label}
        className="peer col-start-1 row-start-1 size-3.5 appearance-none border border-[#b0acaa] bg-white"
      />
      <svg
        width="9"
        height="9"
        viewBox="0 0 9 9"
        fill="none"
        stroke="#000"
        strokeWidth="1.8"
        className="pointer-events-none invisible col-start-1 row-start-1 peer-checked:visible"
      >
        <path d="M1 4.500l2.500 3L8 .5" />
      </svg>
    </span>
  );
}

const classes = [
  { id: "clinton", text: "Clinton [393]", swatch: "bg-[#6e5eee] border-[#4a3fa0]" },
  { id: "trump", text: "Trump [733]", swatch: "bg-[#cb4259] border-[#862c3b]" },
  { id: "other", text: "\u00a0[0]", swatch: "bg-[#5ce5b6] border-[#3d987a]" },
];

function LayersPanel() {
  return (
    <section className="flex flex-1 flex-col">
      <PanelTitle title="Layers" />
      <div className="flex h-[30px] items-center gap-[9px] px-2">
        {["broom", "groupAdd", "eye", "funnel"].map((name) => (
          <button key={name} aria-label={name}>
            <Icon name={name} size={16} />
          </button>
        ))}
        <button aria-label="Filter by expression" className="flex items-center gap-1">
          <Icon name="epsilonFilter" size={16} />
          <Caret className="w-2 text-[#444]" />
        </button>
        {["expand", "collapse", "removeLayer"].map((name) => (
          <button key={name} aria-label={name}>
            <Icon name={name} size={16} />
          </button>
        ))}
      </div>
      <ul className="flex-1 border border-[#b5b1ac] bg-white">
        <li className="flex h-[18px] items-center bg-[#308cc6] text-white">
          <Twisty state="open" className="text-[#10222f]" />
          <Tick id="layer-voting" />
          <Icon name="polygonLayer" size={16} className="ml-1.5" />
          <label htmlFor="layer-voting" className="pl-1.5 font-bold underline underline-offset-2">
            voting_joined [1126]
          </label>
        </li>
        {classes.map((c) => (
          <li key={c.id} className="flex h-5 items-center pl-[43px] last:h-[19px]">
            <Tick id={c.id} />
            <span className={`ml-1.5 size-[18px] border ${c.swatch}`} />
            <label htmlFor={c.id} className="pl-1.5">
              {c.text}
            </label>
          </li>
        ))}
      </ul>
    </section>
  );
}

function Precincts() {
  return (
    <svg
      width="1674"
      height="864"
      viewBox="243 154 1674 864"
      className="block max-w-none"
      stroke="#232323"
      strokeWidth="3"
      strokeLinejoin="round"
    >
      <g transform="translate(1420 400) scale(.3333)">
        <path
          d="M150 94L905 82l-3 38 4 25-3 20-13 14-20 3v8l10 10-15 8-20 27-23 23-14 2-18 25-2 17 17 10 15 16v14l-20 1 10 17 18 18v10l-13 12-18 2v13l11 30-8 20 12 30 16 40 1 15-8 25 21 30-1 23-19 10-17 7-5 15 2 15 18 9-12 16v15l-5 15 9 22-15 23-6 20 19 40-40 35-2 20-33 15-17 35-23 35-5 35-142 2-103 2-2 4-121 1-172 4z"
          fill="#cb4259"
        />
        <path d="M150 738l45 10 65 21 47 1 3 134 11 1 1 114-172 4z" fill="#6e5eee" />
        <path d="M570 852h145l4 88-24 35-5 35-142 2-3-40-4-20 10-50 12-30z" fill="#6e5eee" />
        <path
          d="M820 684l-46-2-6 20 6 22h-54v36l-28 4v24l22 2 5 150 17-35 33-15 2-20 40-35-19-40 6-20 15-23-9-22 5-15v-15z"
          fill="#6e5eee"
        />
        <path d="M550 762h28v16l-10-8h-14z" fill="#6e5eee" />
        <path d="M782 710h26v6h-26z" fill="#cb4259" strokeWidth="2" />
        <g fill="none">
          <path d="M319 92l3 436h-15v242l3 134" />
          <path d="M307 770l120-9h180l85 2h28" />
          <path d="M310 821h64v20h-22v21h-20v-21h-22zM570 852l14-42h128" />
          <path d="M607 761l4-14 17 4V671l20-6 20-18h34l120-9M697 648l2 40 4 17h18v20M648 683h37v42l20 3-2 30-55-14-20 6M658 665l-10 18M718 742l35 5v14h-33M708 768l40 4 5 14h32l10 24" />
        </g>
      </g>
      <g strokeWidth="1">
        <path d="M435 523l7-10 2-10 16-1 2-20 19-9v110l-13-8-18-32-12-4z" fill="#cb4259" />
        <path d="M462 482l20-9v24l-6 4-6-2-3 8-6-4z" fill="#6e5eee" />
        <path d="M460 513l8-2 4 6 10-3v24l-6-2-3 4-6-6-9 2-2-6 6-4-4-6z" fill="#6e5eee" />
        <path
          d="M435 523h20l4 4M441 514l13 4 8-5M454 502v12M462 492h8l2-8M466 482l3 8 13-4M474 490l1 10M442 524l2 6 12 2v6M450 519v9M456 538l6 6 8-3 12 4M458 552l8-2 2-8M466 550l4 10 12-3M462 528l9-3 2-8M470 532v-8l12 2M464 516l4 6M470 499l3 9 9-4M461 507l9 2M472 546v14M438 530l11 4"
          fill="none"
        />
      </g>
    </svg>
  );
}

type Item = { icon: string; text: string; badge?: "plus" };

const sources: Item[] = [
  { icon: "folder", text: "Browser" },
  { icon: "nodesLight", text: "Vector", badge: "plus" },
  { icon: "checker", text: "Raster", badge: "plus" },
  { icon: "mesh", text: "Mesh", badge: "plus" },
  { icon: "comma", text: "Delimited Text", badge: "plus" },
  { icon: "boxGlobe", text: "GeoPackage", badge: "plus" },
  { icon: "feather", text: "SpatiaLite", badge: "plus" },
  { icon: "elephant", text: "PostgreSQL", badge: "plus" },
  { icon: "sail", text: "MSSQL", badge: "plus" },
  { icon: "db2", text: "DB2", badge: "plus" },
  { icon: "virtual", text: "Virtual Layer", badge: "plus" },
  { icon: "globe", text: "WMS/WMTS", badge: "plus" },
  { icon: "wcs", text: "WCS", badge: "plus" },
  { icon: "wfs", text: "WFS", badge: "plus" },
  { icon: "arcMap", text: "ArcGIS Map Server", badge: "plus" },
  { icon: "arcFeature", text: "ArcGIS Feature Server", badge: "plus" },
  { icon: "geonode", text: "GeoNode", badge: "plus" },
];

const pages: Item[] = [
  { icon: "info", text: "Information" },
  { icon: "wrench", text: "Source" },
  { icon: "broom", text: "Symbology" },
  { icon: "labels", text: "Labels" },
  { icon: "diagrams", text: "Diagrams" },
  { icon: "cube", text: "3D View" },
  { icon: "fields", text: "Source Fields" },
  { icon: "form", text: "Attributes Form" },
  { icon: "joins", text: "Joins" },
  { icon: "storage", text: "Auxiliary Storage" },
  { icon: "actions", text: "Actions" },
  { icon: "display", text: "Display" },
  { icon: "brush", text: "Rendering" },
  { icon: "epsilon", text: "Variables" },
  { icon: "metadata", text: "Metadata" },
  { icon: "dependencies", text: "Dependencies" },
  { icon: "legend", text: "Legend" },
  { icon: "server", text: "QGIS Server" },
  { icon: "digitizing", text: "Digitizing" },
];

type SideListProps = { items: Item[]; current: string; size: number; gap: string };

function SideList({ items, current, size, gap }: SideListProps) {
  return (
    <ul>
      {items.map((item) => (
        <li key={item.text}>
          <button
            className={`flex h-9 w-full items-center text-left whitespace-nowrap ${gap} ${
              item.text === current ? "bg-[#efebe7] pl-[7px] text-black" : "pl-1 text-[#f4f4f4]"
            }`}
          >
            <Icon name={item.icon} size={size} badge={item.badge} />
            {item.text}
          </button>
        </li>
      ))}
    </ul>
  );
}

function DialogButton({ icon, children, primary }: { icon?: string; children: ReactNode; primary?: boolean }) {
  return (
    <button
      className={`flex h-6 w-20 items-center justify-center rounded-xs border bg-linear-to-b ${
        primary ? "border-[#2f7cab] from-[#fbfbfb] to-[#dbe2e8]" : "border-[#b0acaa] from-white to-[#ebe9e7]"
      }`}
    >
      {icon && <Icon name={icon} size={16} />}
      {children}
    </button>
  );
}

function ScrollBar({ thumb }: { thumb: string }) {
  return (
    <div className="flex w-[15px] shrink-0 flex-col border-l border-[#b5b1ac] bg-[#e4e3e0]">
      <button
        aria-label="Scroll up"
        className="flex h-3.5 items-center justify-center border-b border-[#b5b1ac] bg-[#f8f8f8]"
      >
        <Caret className="w-2 rotate-180 text-[#555]" />
      </button>
      <div className={`border-b border-[#b5b1ac] bg-linear-to-r from-[#fdfdfd] to-[#f0f0ef] ${thumb}`} />
      <div className="flex-1" />
      <button
        aria-label="Scroll down"
        className="flex h-3.5 items-center justify-center border-t border-[#b5b1ac] bg-[#fdfdfd]"
      >
        <Caret className="w-2 text-[#555]" />
      </button>
    </div>
  );
}

function SourceManager() {
  return (
    <div
      role="dialog"
      aria-label="Data Source Manager"
      className="absolute top-[372px] left-[478px] flex h-[624px] w-[1004px] flex-col border-2 border-t-0 border-[#5f686b] bg-[#efebe7]"
    >
      <h1 className="h-[22px] border-y border-[#333] bg-[#5f686b] font-['Liberation_Sans',sans-serif] text-base leading-4 text-white">
        Data Source Manager | Virtual Layer
      </h1>
      <div className="flex min-h-0 flex-1">
        <div className="w-[258px] overflow-hidden bg-[#5b5b5b]">
          <SideList items={sources} current="Virtual Layer" size={28} gap="gap-[5px]" />
        </div>
        <ScrollBar thumb="h-[480px]" />
        <div className="flex flex-1 flex-col px-3 pb-3">
          <div className="mt-[60px] h-[224px] rounded-xs border border-[#d6d2ce] py-2.5 pr-3">
            <div className="h-[173px] border border-[#b5b1ac] bg-white pt-[18px]">
              <div className="h-[30px] bg-[#308cc6]" />
            </div>
          </div>
          <div className="mt-[25px] h-[197px] rounded-xs border border-[#d6d2ce] py-2.5 pr-3">
            <div className="h-[173px] border border-[#b5b1ac] bg-white" />
          </div>
          <button
            aria-label="Options"
            className="mt-1.5 h-[23px] w-20 self-end rounded-xs border border-[#b0acaa] bg-[#f3f1ee]"
          />
          <div className="mt-auto flex gap-1.5">
            <DialogButton>Test</DialogButton>
            <span className="flex-1" />
            <DialogButton icon="close">Close</DialogButton>
            <DialogButton icon="apply">
              <span>
                <u className="underline-offset-2">A</u>dd
              </span>
            </DialogButton>
            <DialogButton icon="help">Help</DialogButton>
          </div>
        </div>
      </div>
    </div>
  );
}

type Row = [string, ReactNode];

const provider: Row[] = [
  ["Name", "voting_joined"],
  [
    "Path",
    <a
      href="#path"
      className="block font-['Liberation_Sans',sans-serif] text-xs leading-[15px] text-[#6c9fd2] underline underline-offset-2"
    >
      /home/serge/Dropbox/p/pbpl273/20w/lectures/04/voting_joined.shp
    </a>,
  ],
  ["Source", "/home/serge/Dropbox/p/pbpl273/20w/lectures/04/voting_joined.shp|layername=voting_joined"],
  ["Storage", "ESRI Shapefile"],
  ["Comment", ""],
  ["Encoding", "UTF-8"],
  ["Geometry", "Polygon (MultiPolygon)"],
  [
    "CRS",
    <>
      USER:100027 - * Generated CRS (+proj=lcc +lat_1=32.78333333333333
      <br />
      +lat_2=33.88333333333333 +lat_0=32.16666666666666 +lon_0=-116.25 +x_0=2000000
      <br />
      +y_0=500000.0000000001 +ellps=GRS80 +towgs84=0,0,0,0,0,0,0 +units=us-ft +no_defs) -
      <br />
      Projected
    </>,
  ],
  [
    "Extent",
    <>
      6128736.1242943853139877,2098700.9515317231416702 :
      <br />
      7111604.3111131340265274,2341276.6432166397571564
    </>,
  ],
  ["Unit", "feet"],
  ["Feature count", "1,126"],
];

const identification: Row[] = [
  ["Identifier", ""],
  ["Parent Identifier", ""],
  ["Title", ""],
  ["Type", ""],
  ["Language", ""],
  ["Abstract", ""],
  ["Categories", ""],
  ["Keywords", ""],
];

const extent: Row[] = [
  ["CRS", ""],
  [
    "Spatial Extent",
    <>
      <b>CRS:</b> - - Projected
      <br />
      <b>X Minimum:</b> 0
      <br />
      <b>Y Minimum:</b> 0
      <br />
      <b>X Maximum:</b> 0
      <br />
      <b>Y Maximum:</b> 0
      <br />
      <br />
    </>,
  ],
  [
    "Temporal Extent",
    <>
      <b>Start:</b>
      <br />
      <b>End:</b>
    </>,
  ],
];

const access: Row[] = [
  ["Fees", ""],
  ["Licenses", ""],
  ["Rights", ""],
];

function Section({ title, rows, labels }: { title: string; rows: Row[]; labels: string }) {
  return (
    <section className="pb-[30px]">
      <h2 className="border-b border-[#999] pb-1.5 pl-[11px] text-lg leading-6 text-[#589632]">{title}</h2>
      <table className="mt-2 border-separate border-spacing-0">
        <tbody>
          {rows.map(([label, value]) => (
            <tr key={label} className="align-top">
              <th className={`py-px text-right font-bold ${labels}`}>{label}</th>
              <td className="py-px pl-[17px] whitespace-nowrap">{value}</td>
            </tr>
          ))}
        </tbody>
      </table>
    </section>
  );
}

function LayerProperties() {
  return (
    <div
      role="dialog"
      aria-label="Layer Properties"
      className="absolute top-[72px] left-[622px] flex h-[880px] w-[829px] flex-col border-2 border-t-0 border-[#265478] bg-[#efebe7]"
    >
      <h1 className="h-[22px] border-y border-[#4d7593] bg-[#265478] font-['Liberation_Sans',sans-serif] text-base leading-4 text-white">
        Layer Properties - voting_joined | Information
      </h1>
      <div className="flex min-h-0 flex-1">
        <div className="w-[150px] shrink-0 bg-[#5b5b5b]">
          <label className="mb-1.5 flex h-[23px] items-center gap-2 border border-[#b5b1ac] bg-white pl-2">
            <Search />
            <input aria-label="Search" className="w-full min-w-0 outline-none" />
          </label>
          <SideList items={pages} current="Information" size={25} gap="gap-2" />
        </div>
        <div className="flex min-w-0 flex-1 flex-col pt-[3px] pr-[3px] pb-[3px] pl-1">
          <div className="flex min-h-0 flex-1 border border-[#b5b1ac] bg-white">
            <div className="min-w-0 flex-1 overflow-hidden pt-[3px] pr-[3px] pl-1 font-[Lato,sans-serif] text-xs leading-[15px] text-black">
              <Section title="Information from provider" rows={provider} labels="w-[107px]" />
              <Section title="Identification" rows={identification} labels="w-[120px]" />
              <Section title="Extent" rows={extent} labels="w-[120px]" />
              <Section title="Access" rows={access} labels="w-[93px]" />
            </div>
            <ScrollBar thumb="h-[296px]" />
          </div>
          <div className="mt-1.5 flex gap-1.5">
            <button className="flex h-6 w-20 items-center justify-between rounded-xs border border-[#b0acaa] bg-linear-to-b from-white to-[#ebe9e7] pr-1 pl-[18px]">
              Style
              <svg width="6" height="4" viewBox="0 0 6 4">
                <path d="M0 0h6L3 4z" fill="#444" />
              </svg>
            </button>
            <span className="flex-1" />
            <DialogButton icon="ok" primary>
              OK
            </DialogButton>
            <DialogButton icon="cancel">Cancel</DialogButton>
            <DialogButton icon="apply">Apply</DialogButton>
            <DialogButton icon="help">Help</DialogButton>
          </div>
        </div>
      </div>
    </div>
  );
}

function Spin({ id, label, value, className }: { id: string; label: string; value: string; className: string }) {
  return (
    <div className="flex items-center gap-1">
      <label htmlFor={id} className="whitespace-nowrap">
        {label}
      </label>
      <span className={`flex h-[22px] items-center rounded-xs border border-[#b0acaa] bg-white ${className}`}>
        <input id={id} defaultValue={value} className="h-full min-w-0 flex-1 pl-1 outline-none" />
        <span className="flex h-full w-4 flex-col items-center justify-center gap-1">
          <Caret className="w-2 rotate-180" />
          <Caret className="w-2" />
        </span>
      </span>
    </div>
  );
}

function StatusBar() {
  return (
    <footer className="flex h-[29px] items-center text-[9px]">
      <label className="ml-1 flex h-[23px] w-[248px] items-center gap-1.5 rounded-xs border border-[#b0acaa] bg-white pl-2 text-xs">
        <Search />
        <input
          aria-label="Locator"
          placeholder="Type to locate (Ctrl+K)"
          className="w-full outline-none placeholder:text-[#8a8a88]"
        />
      </label>
      <span className="pl-2">Toggles the editing state of the current layer</span>
      <div className="ml-auto flex items-center gap-1 pr-1.5">
        <label htmlFor="coordinate">Coordinate</label>
        <input
          id="coordinate"
          defaultValue="6346450,2385958"
          className="h-[22px] w-[92px] rounded-xs border border-[#b0acaa] bg-white pl-[3px]"
        />
        <Icon name="toggleExtents" size={16} />
        <label htmlFor="scale" className="pl-2.5">
          Scale
        </label>
        <span className="grid h-[22px] w-24 rounded-xs border border-[#b0acaa] bg-white">
          <select id="scale" className="col-start-1 row-start-1 appearance-none pl-1 outline-none">
            <option>1:879729</option>
          </select>
          <span className="pointer-events-none col-start-1 row-start-1 flex w-5 items-center justify-center justify-self-end border-l border-[#b0acaa]">
            <Caret className="w-2" />
          </span>
        </span>
        <span className="pr-1 pl-1.5">
          <Icon name="lock" size={16} />
        </span>
        <Spin id="magnifier" label="Magnifier" value="100%" className="w-[81px]" />
        <span className="pl-5">
          <Spin id="rotation" label="Rotation" value="0.0 °" className="w-[93px]" />
        </span>
        <span className="flex items-center gap-1 pl-1">
          <Tick id="render" />
          <label htmlFor="render">Render</label>
        </span>
        <button className="flex items-center gap-1 pl-4">
          <Icon name="crs" size={14} />
          USER:100027
        </button>
        <button aria-label="Messages" className="pl-4">
          <Icon name="messages" size={17} />
        </button>
      </div>
    </footer>
  );
}

export default function App() {
  return (
    <div className="relative flex h-screen flex-col overflow-hidden border-b-2 border-l-[3px] border-[#5f686b] bg-[#efebe7] font-['DejaVu_Sans',sans-serif] text-xs text-[#111]">
      <div className="flex h-4 shrink-0 overflow-hidden border-b border-[#333] bg-[#5f686b] font-['Liberation_Sans',sans-serif] text-base leading-4">
        <span className="-mt-1.5 w-1/2 text-white">*lec04 - QGIS</span>
        <span className="flex-1 bg-[#222] text-[#aaa]">
          <span className="-mt-1.5 block pl-0.5">st</span>
        </span>
      </div>
      <nav className="flex h-5 shrink-0 items-center gap-[15px] border-b border-[#ccc8c4] pl-2.5">
        {menus.map(([before, key, after]) => (
          <button key={before + key + after}>
            {before}
            <u className="underline-offset-2">{key}</u>
            {after}
          </button>
        ))}
      </nav>
      <Toolbar groups={mainTools} />
      <Toolbar groups={editTools} />
      <Toolbar groups={webTools} />
      <main className="flex min-h-0 flex-1">
        <aside className="flex w-[233px] shrink-0 flex-col">
          <BrowserPanel />
          <div className="flex h-[7px] items-center justify-center">
            <span className="h-0.5 w-4 border-t border-dotted border-[#999]" />
          </div>
          <LayersPanel />
        </aside>
        <div className="ml-1.5 flex-1 overflow-hidden border border-r-0 border-[#b5b1ac] bg-white">
          <Precincts />
        </div>
      </main>
      <StatusBar />
      <SourceManager />
      <LayerProperties />
    </div>
  );
}
